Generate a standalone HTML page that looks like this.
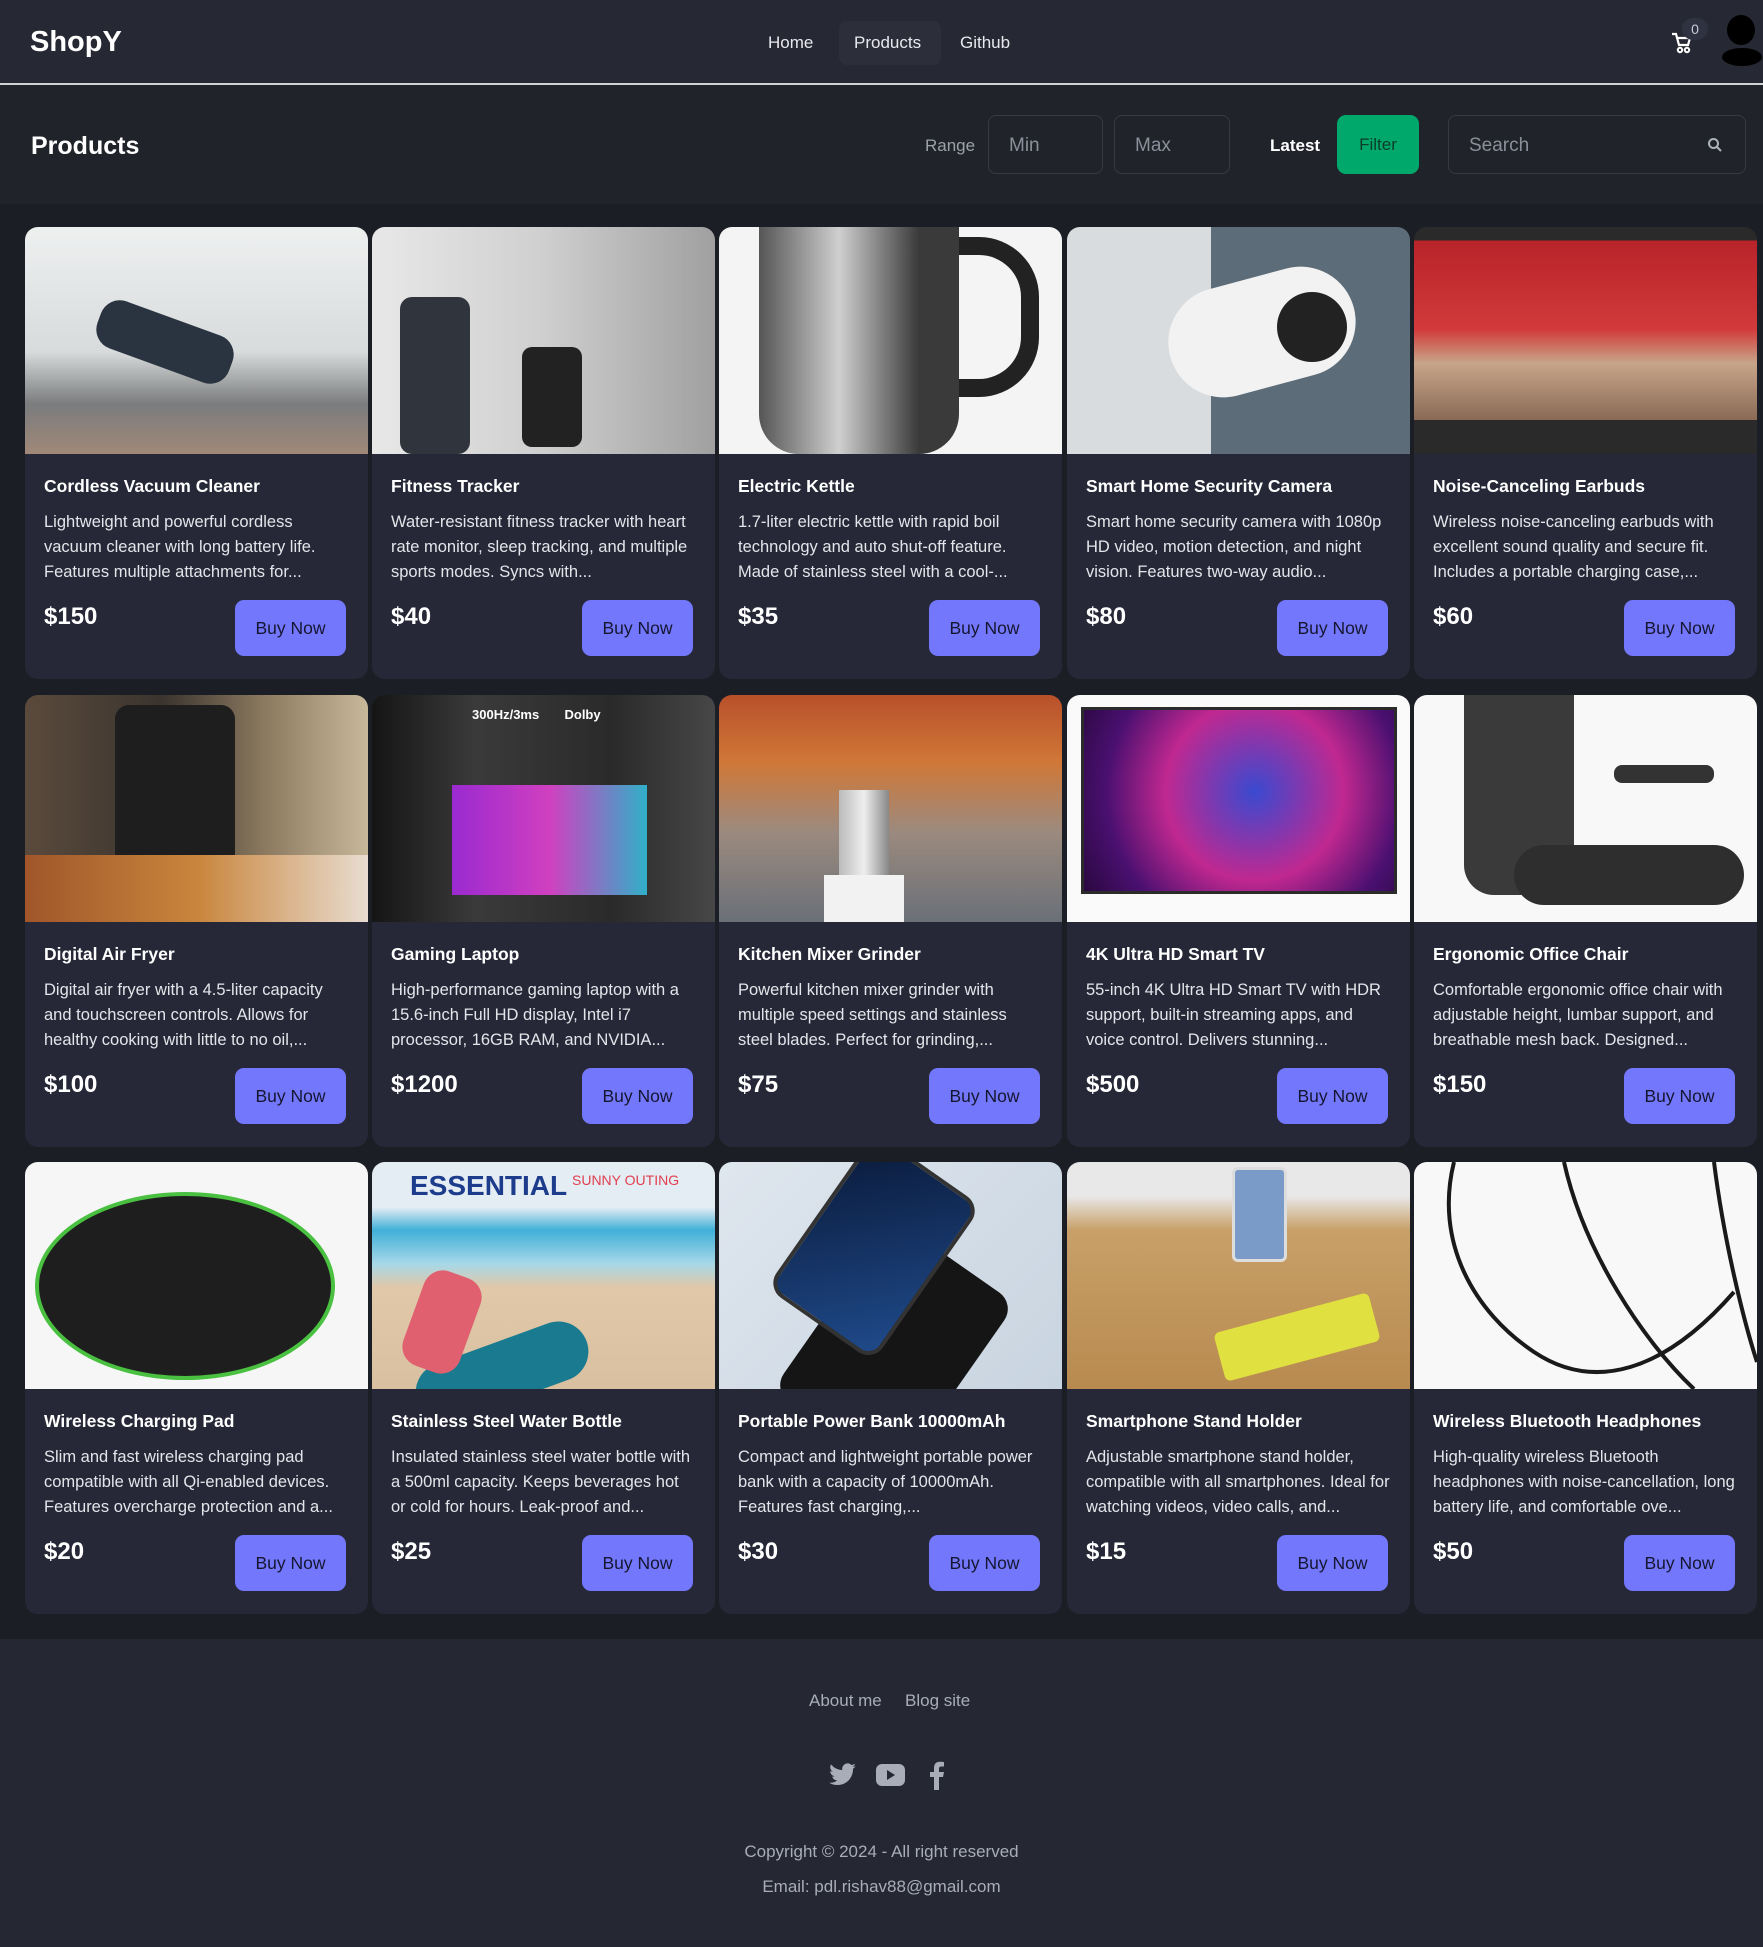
<!DOCTYPE html>
<html><head><meta charset="utf-8"><style>
*{box-sizing:border-box;margin:0;padding:0}
body{width:1763px;height:1947px;background:#1c1e26;font-family:"Liberation Sans",sans-serif;color:#e8e9ee;overflow:hidden;position:relative}
.nav{position:absolute;left:0;top:0;width:1763px;height:85px;background:#262833;border-bottom:2px solid #d0d2d8}
.logo{position:absolute;left:30px;top:26px;font-size:29px;font-weight:bold;color:#fff}
.links a{position:absolute;top:33px;font-size:17px;color:#e8e8ee}
.pbox{position:absolute;left:839px;top:21px;width:102px;height:44px;background:#2c2e3a;border-radius:8px}
.hdr{position:absolute;left:0;top:85px;width:1763px;height:119px;background:#20232a}
.hdr .t{position:absolute;left:31px;top:47px;font-size:25px;font-weight:bold;color:#fff}
.inp{position:absolute;top:30px;height:59px;border:1px solid #363a45;border-radius:8px;color:#8a8f9a;font-size:19px;padding:19px 0 0 20px}
.card{position:absolute;width:343px;height:452px;background:#262837;border-radius:13px;overflow:hidden}
.img{height:227px;position:relative;overflow:hidden}
.card h3{position:absolute;left:19px;top:249px;font-size:17.5px;color:#fff;font-weight:bold}
.card p{position:absolute;left:19px;top:283px;width:305px;font-size:16.5px;line-height:25px;color:#e4e5ea}
.pr{position:absolute;left:19px;top:376px;font-size:24px;font-weight:bold;color:#fff}
.btn{position:absolute;left:210px;top:373px;width:111px;height:56px;background:#7377fb;border-radius:9px;color:#151630;font-size:17.5px;text-align:center;line-height:56px}
.foot{position:absolute;left:0;top:1639px;width:1763px;height:308px;background:#252733;color:#a9adb8;text-align:center;font-size:17px}
</style></head><body>
<div class="nav">
<div class="logo">ShopY</div>
<div class="pbox"></div>
<div class="links"><a style="left:768px">Home</a><a style="left:854px">Products</a><a style="left:960px">Github</a></div>
<svg style="position:absolute;left:1670px;top:31px" width="22" height="24" viewBox="0 0 22 24"><path d="M2 3h4l3 11h9l2-7H8" fill="none" stroke="#fff" stroke-width="2.2"/><circle cx="10" cy="19" r="2.2" fill="none" stroke="#fff" stroke-width="2"/><circle cx="17" cy="19" r="2.2" fill="none" stroke="#fff" stroke-width="2"/></svg>
<div style="position:absolute;left:1682px;top:18px;width:26px;height:22px;border-radius:11px;background:#2f3240;color:#c8ccd6;font-size:14px;text-align:center;line-height:22px">0</div>
<div style="position:absolute;left:1727px;top:15px;width:28px;height:30px;border-radius:50%;background:#000"></div>
<div style="position:absolute;left:1722px;top:48px;width:40px;height:18px;border-radius:50%;background:#000"></div>
</div>
<div class="hdr">
<div class="t">Products</div>
<div style="position:absolute;left:925px;top:51px;font-size:17px;color:#9ba0aa">Range</div>
<div class="inp" style="left:988px;width:115px">Min</div>
<div class="inp" style="left:1114px;width:116px">Max</div>
<div style="position:absolute;left:1270px;top:51px;font-size:17px;color:#fff;font-weight:bold">Latest</div>
<div style="position:absolute;left:1337px;top:30px;width:82px;height:59px;background:#00a96b;border-radius:9px;color:#0d3c2a;font-size:17px;text-align:center;line-height:59px">Filter</div>
<div class="inp" style="left:1448px;width:298px">Search<svg style="position:absolute;right:22px;top:21px" width="16" height="16" viewBox="0 0 16 16"><circle cx="6.5" cy="6.5" r="4.5" fill="none" stroke="#aeb2bb" stroke-width="2"/><path d="M10 10l4 4" stroke="#aeb2bb" stroke-width="2"/></svg></div>
</div>

<!-- Row 1 -->
<div class="card" style="left:25px;top:227px"><div class="img" style="background:linear-gradient(180deg,#eef0f0 0%,#d8dbdc 55%,#7a7c7e 78%,#a08878 100%)"><div style="position:absolute;left:70px;top:90px;width:140px;height:50px;background:#2a3440;border-radius:20px;transform:rotate(20deg)"></div></div><h3>Cordless Vacuum Cleaner</h3><p>Lightweight and powerful cordless vacuum cleaner with long battery life. Features multiple attachments for...</p><div class="pr">$150</div><div class="btn">Buy Now</div></div>
<div class="card" style="left:372px;top:227px"><div class="img" style="background:linear-gradient(90deg,#e8e8e8,#cfcfd0 50%,#a0a0a0)"><div style="position:absolute;left:28px;top:70px;width:70px;height:157px;background:#30343c;border-radius:12px"></div><div style="position:absolute;left:150px;top:120px;width:60px;height:100px;background:#222;border-radius:10px"></div></div><h3>Fitness Tracker</h3><p>Water-resistant fitness tracker with heart rate monitor, sleep tracking, and multiple sports modes. Syncs with...</p><div class="pr">$40</div><div class="btn">Buy Now</div></div>
<div class="card" style="left:719px;top:227px"><div class="img" style="background:#f4f4f4"><div style="position:absolute;left:40px;top:0;width:200px;height:227px;background:linear-gradient(90deg,#555,#cfcfcf 40%,#3a3a3a 80%);border-radius:0 0 40px 40px"></div><div style="position:absolute;left:240px;top:10px;width:80px;height:160px;border:18px solid #222;border-left:none;border-radius:0 60px 60px 0"></div></div><h3>Electric Kettle</h3><p>1.7-liter electric kettle with rapid boil technology and auto shut-off feature. Made of stainless steel with a cool-...</p><div class="pr">$35</div><div class="btn">Buy Now</div></div>
<div class="card" style="left:1067px;top:227px"><div class="img" style="background:linear-gradient(90deg,#d9dcdf 0 42%,#5c6c78 42%)"><div style="position:absolute;left:100px;top:50px;width:190px;height:110px;background:#f2f2f2;border-radius:55px;transform:rotate(-15deg)"></div><div style="position:absolute;left:210px;top:65px;width:70px;height:70px;background:#222;border-radius:50%"></div></div><h3>Smart Home Security Camera</h3><p>Smart home security camera with 1080p HD video, motion detection, and night vision. Features two-way audio...</p><div class="pr">$80</div><div class="btn">Buy Now</div></div>
<div class="card" style="left:1414px;top:227px"><div class="img" style="background:linear-gradient(180deg,#2a2a2a 0 6%,#b8232a 6%,#d23a3a 45%,#c7a58a 60%,#8a6a55 85%,#2a2a2a 85%)"></div><h3>Noise-Canceling Earbuds</h3><p>Wireless noise-canceling earbuds with excellent sound quality and secure fit. Includes a portable charging case,...</p><div class="pr">$60</div><div class="btn">Buy Now</div></div>

<!-- Row 2 -->
<div class="card" style="left:25px;top:695px"><div class="img" style="background:linear-gradient(90deg,#5a4a3c,#3a342e 40%,#8c7a60 70%,#c8b89a)"><div style="position:absolute;left:90px;top:10px;width:120px;height:170px;background:#1e1e1e;border-radius:14px"></div><div style="position:absolute;left:0;top:160px;width:343px;height:67px;background:linear-gradient(90deg,#a0562a,#c9853c,#e8dcd0)"></div></div><h3>Digital Air Fryer</h3><p>Digital air fryer with a 4.5-liter capacity and touchscreen controls. Allows for healthy cooking with little to no oil,...</p><div class="pr">$100</div><div class="btn">Buy Now</div></div>
<div class="card" style="left:372px;top:695px"><div class="img" style="background:linear-gradient(90deg,#151515,#3a3a3a 30%,#2a2a2a 70%,#474747)"><div style="position:absolute;left:80px;top:90px;width:195px;height:110px;background:linear-gradient(90deg,#9a2ad0,#d040c0 50%,#30b0c8)"></div><div style="position:absolute;left:100px;top:12px;color:#fff;font-size:13px;font-weight:bold">300Hz/3ms &nbsp;&nbsp;&nbsp;&nbsp;&nbsp; Dolby</div></div><h3>Gaming Laptop</h3><p>High-performance gaming laptop with a 15.6-inch Full HD display, Intel i7 processor, 16GB RAM, and NVIDIA...</p><div class="pr">$1200</div><div class="btn">Buy Now</div></div>
<div class="card" style="left:719px;top:695px"><div class="img" style="background:linear-gradient(180deg,#b8502a,#d07838 30%,#9c8a7e 60%,#6a7078 100%)"><div style="position:absolute;left:120px;top:95px;width:50px;height:132px;background:linear-gradient(90deg,#bbb,#eee,#888)"></div><div style="position:absolute;left:105px;top:180px;width:80px;height:47px;background:#f2f2f2"></div></div><h3>Kitchen Mixer Grinder</h3><p>Powerful kitchen mixer grinder with multiple speed settings and stainless steel blades. Perfect for grinding,...</p><div class="pr">$75</div><div class="btn">Buy Now</div></div>
<div class="card" style="left:1067px;top:695px"><div class="img" style="background:#fafafa"><div style="position:absolute;left:14px;top:12px;width:316px;height:187px;background:#2b2b2b;padding:3px"><div style="width:100%;height:100%;background:radial-gradient(circle at 55% 45%,#3a4ad0,#c02890 45%,#4a1070 75%,#2a0840)"></div></div></div><h3>4K Ultra HD Smart TV</h3><p>55-inch 4K Ultra HD Smart TV with HDR support, built-in streaming apps, and voice control. Delivers stunning...</p><div class="pr">$500</div><div class="btn">Buy Now</div></div>
<div class="card" style="left:1414px;top:695px"><div class="img" style="background:#f8f8f8"><div style="position:absolute;left:50px;top:0;width:110px;height:200px;background:#3a3a3a;border-radius:0 0 30px 30px"></div><div style="position:absolute;left:100px;top:150px;width:230px;height:60px;background:#2e2e2e;border-radius:40px"></div><div style="position:absolute;left:200px;top:70px;width:100px;height:18px;background:#333;border-radius:8px"></div></div><h3>Ergonomic Office Chair</h3><p>Comfortable ergonomic office chair with adjustable height, lumbar support, and breathable mesh back. Designed...</p><div class="pr">$150</div><div class="btn">Buy Now</div></div>

<!-- Row 3 -->
<div class="card" style="left:25px;top:1162px"><div class="img" style="background:#f6f6f6"><div style="position:absolute;left:10px;top:30px;width:300px;height:188px;border-radius:50%;background:#1e1e1e;border:4px solid #4ac040"></div></div><h3>Wireless Charging Pad</h3><p>Slim and fast wireless charging pad compatible with all Qi-enabled devices. Features overcharge protection and a...</p><div class="pr">$20</div><div class="btn">Buy Now</div></div>
<div class="card" style="left:372px;top:1162px"><div class="img" style="background:linear-gradient(180deg,#e4ecf4 0 20%,#40b0d8 30%,#a8d8e8 45%,#e0c8a8 55%,#d8c0a0 100%)"><div style="position:absolute;left:38px;top:8px;color:#1d3c8c;font-size:28px;font-weight:bold">ESSENTIAL</div><div style="position:absolute;left:200px;top:10px;color:#e04050;font-size:14px">SUNNY OUTING</div><div style="position:absolute;left:40px;top:180px;width:180px;height:60px;background:#1a7a90;border-radius:30px;transform:rotate(-20deg)"></div><div style="position:absolute;left:40px;top:110px;width:60px;height:100px;background:#e06070;border-radius:20px;transform:rotate(20deg)"></div></div><h3>Stainless Steel Water Bottle</h3><p>Insulated stainless steel water bottle with a 500ml capacity. Keeps beverages hot or cold for hours. Leak-proof and...</p><div class="pr">$25</div><div class="btn">Buy Now</div></div>
<div class="card" style="left:719px;top:1162px"><div class="img" style="background:linear-gradient(135deg,#dfe6ee,#c8d4e0)"><div style="position:absolute;left:100px;top:80px;width:150px;height:210px;background:#151515;border-radius:20px;transform:rotate(35deg)"></div><div style="position:absolute;left:90px;top:-10px;width:130px;height:190px;background:linear-gradient(135deg,#0a1a3a,#1f4a8a);border:4px solid #333;border-radius:18px;transform:rotate(35deg)"></div></div><h3>Portable Power Bank 10000mAh</h3><p>Compact and lightweight portable power bank with a capacity of 10000mAh. Features fast charging,...</p><div class="pr">$30</div><div class="btn">Buy Now</div></div>
<div class="card" style="left:1067px;top:1162px"><div class="img" style="background:linear-gradient(180deg,#e8e8e8 0 15%,#c8a068 30%,#b88a50 100%)"><div style="position:absolute;left:165px;top:5px;width:55px;height:95px;background:#7a9ac8;border:3px solid #ddd;border-radius:6px"></div><div style="position:absolute;left:150px;top:150px;width:160px;height:50px;background:#e0e040;border-radius:6px;transform:rotate(-15deg)"></div></div><h3>Smartphone Stand Holder</h3><p>Adjustable smartphone stand holder, compatible with all smartphones. Ideal for watching videos, video calls, and...</p><div class="pr">$15</div><div class="btn">Buy Now</div></div>
<div class="card" style="left:1414px;top:1162px"><div class="img" style="background:#f8f8f8"><svg width="343" height="227"><path d="M40 0C20 80 60 150 120 190S250 210 320 130M150 0C170 90 230 180 280 227M300 0C310 80 330 160 343 200" fill="none" stroke="#1a1a1a" stroke-width="4"/></svg></div><h3>Wireless Bluetooth Headphones</h3><p>High-quality wireless Bluetooth headphones with noise-cancellation, long battery life, and comfortable ove...</p><div class="pr">$50</div><div class="btn">Buy Now</div></div>

<div class="foot">
<div style="position:absolute;left:809px;top:52px">About me</div>
<div style="position:absolute;left:905px;top:52px">Blog site</div>
<svg style="position:absolute;left:829px;top:124px" width="28" height="24" viewBox="0 0 24 20"><path d="M23 2.3a9 9 0 0 1-2.7.8A4.7 4.7 0 0 0 22.4.4a9.4 9.4 0 0 1-3 1.1A4.7 4.7 0 0 0 11.4 5.8 13.3 13.3 0 0 1 1.7.9a4.7 4.7 0 0 0 1.5 6.3A4.6 4.6 0 0 1 1 6.6a4.7 4.7 0 0 0 3.8 4.6 4.7 4.7 0 0 1-2.1.1 4.7 4.7 0 0 0 4.4 3.3A9.4 9.4 0 0 1 0 16.5 13.3 13.3 0 0 0 7.2 18.6c8.7 0 13.4-7.2 13.4-13.4v-.6A9.5 9.5 0 0 0 23 2.3z" fill="#a9adb8"/></svg>
<svg style="position:absolute;left:876px;top:125px" width="29" height="22" viewBox="0 0 29 22"><rect width="29" height="22" rx="6" fill="#a9adb8"/><path d="M11 6l8 5-8 5z" fill="#252733"/></svg>
<svg style="position:absolute;left:929px;top:122px" width="16" height="29" viewBox="0 0 16 29"><path d="M10 29V16h4l1-5h-5V8c0-1.5.5-2.5 2.6-2.5H15V1a30 30 0 0 0-4-.2C7 .8 5 3 5 7v4H1v5h4v13z" fill="#a9adb8"/></svg>
<div style="position:absolute;left:0;width:1763px;top:203px;font-size:17px">Copyright © 2024 - All right reserved</div>
<div style="position:absolute;left:0;width:1763px;top:238px;font-size:17px">Email: pdl.rishav88@gmail.com</div>
</div>
</body></html>
